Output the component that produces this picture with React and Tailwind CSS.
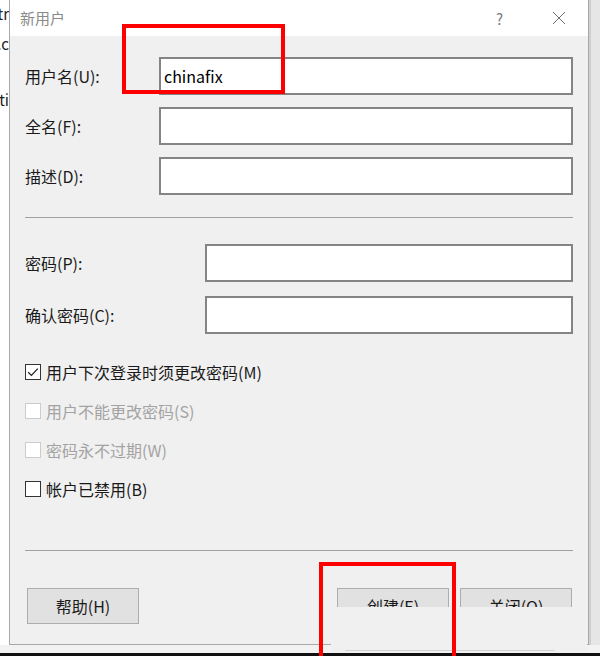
import React from "react";

const font = "font-['Microsoft_YaHei','Noto_Sans_CJK_SC',sans-serif]";

function Field({ label, labelW, value }) {
  return (
    <div className="flex items-center h-[38px]">
      <div className="text-[16px] text-[#1a1a1a] shrink-0" style={{ width: labelW }}>
        {label}
      </div>
      <div className="flex-1 h-[38px] bg-white border-2 border-[#848484] flex items-center pl-[3px] text-[16px] text-black">
        {value}
      </div>
    </div>
  );
}

function Check({ label, checked, disabled }) {
  return (
    <div className="flex items-center h-[16px] gap-[5px]">
      <div
        className={
          "w-[16px] h-[16px] border bg-white flex items-center justify-center shrink-0 " +
          (disabled ? "border-[#cccccc]" : "border-[#333333]")
        }
      >
        {checked && (
          <svg width="14" height="14" viewBox="0 0 14 14">
            <path d="M2.2 7.2 L5.4 10.4 L11.8 3.6" fill="none" stroke="#222" strokeWidth="1.3" />
          </svg>
        )}
      </div>
      <div className={"text-[16px] whitespace-nowrap " + (disabled ? "text-[#a3a3a3]" : "text-[#1a1a1a]")}>{label}</div>
    </div>
  );
}

function Btn({ children }) {
  return (
    <div className="w-[112px] h-[36px] bg-[#e1e1e1] border border-[#adadad] flex items-center justify-center text-[16px] text-[#1a1a1a]">
      {children}
    </div>
  );
}

export default function App() {
  return (
    <div className={"relative w-[600px] h-[656px] bg-white overflow-hidden flex flex-col " + font}>
      <div className="flex h-[645px]">
        {/* background window fragments */}
        <div className="w-[9px] shrink-0 bg-white flex flex-col text-[15px] text-[#222] leading-none">
          <div className="flex justify-end overflow-hidden h-[18px] mt-[6px] whitespace-nowrap">Contr</div>
          <div className="flex justify-end overflow-hidden h-[18px] mt-[12px] whitespace-nowrap">Acc.c</div>
          <div className="flex justify-end overflow-hidden h-[18px] mt-[38px] whitespace-nowrap">Acti</div>
        </div>
        {/* dialog */}
        <div className="w-[580px] shrink-0 flex flex-col border-l border-r border-b border-[#a9a9a9] bg-[#f0f0f0]">
          <div className="h-[36px] bg-white flex items-center shrink-0">
            <div className="pl-[10px] text-[15px] text-[#8a8a8a]">新用户</div>
            <div className="flex-1" />
            <div className="text-[15px] text-[#7a7a7a] mr-[49px] leading-none">?</div>
            <svg width="14" height="14" viewBox="0 0 14 14" className="mr-[22px]">
              <path d="M1 1 L13 13 M13 1 L1 13" stroke="#6f6f6f" strokeWidth="1" />
            </svg>
          </div>
          <div className="flex-1 flex flex-col px-[15px] pt-[21px]">
            <div className="flex flex-col gap-[12px]">
              <Field label="用户名(U):" labelW={134} value="chinafix" />
              <Field label="全名(F):" labelW={134} />
              <Field label="描述(D):" labelW={134} />
            </div>
            <div className="h-px bg-[#a0a0a0] mt-[22px]" />
            <div className="flex flex-col gap-[14px] mt-[26px]">
              <Field label="密码(P):" labelW={180} />
              <Field label="确认密码(C):" labelW={180} />
            </div>
            <div className="flex flex-col gap-[23px] mt-[30px]">
              <Check label="用户下次登录时须更改密码(M)" checked />
              <Check label="用户不能更改密码(S)" disabled />
              <Check label="密码永不过期(W)" disabled />
              <Check label="帐户已禁用(B)" />
            </div>
            <div className="h-px bg-[#a0a0a0] mt-[53px]" />
            <div className="flex mt-[37px] pl-[2px] pr-[1px]">
              <Btn>帮助(H)</Btn>
              <div className="flex-1" />
              <div className="flex gap-[11px]">
                <Btn>创建(E)</Btn>
                <Btn>关闭(O)</Btn>
              </div>
            </div>
          </div>
        </div>
        <div className="flex-1 bg-[#e6e6e6] border-l-2 border-[#cfcfcf]" />
      </div>
      <div className="h-[8px] bg-[#f2f2f2]" />
      <div className="h-[3px] bg-[#111]" />

      {/* blurred patch over the buttons */}
      <div className="absolute left-[331px] top-[607px] w-[256px] h-[46px] bg-[#f0f0f0]">
        <div className="absolute left-[14px] top-[43px] w-[210px] h-px bg-[#c4c4c4] opacity-70" />
      </div>

      {/* red annotation boxes */}
      <div className="absolute left-[122px] top-[24px] w-[163px] h-[70px] border-4 border-[#ff0000]" />
      <div className="absolute left-[319px] top-[562px] w-[137px] h-[110px] border-4 border-[#ff0000]" />
    </div>
  );
}
